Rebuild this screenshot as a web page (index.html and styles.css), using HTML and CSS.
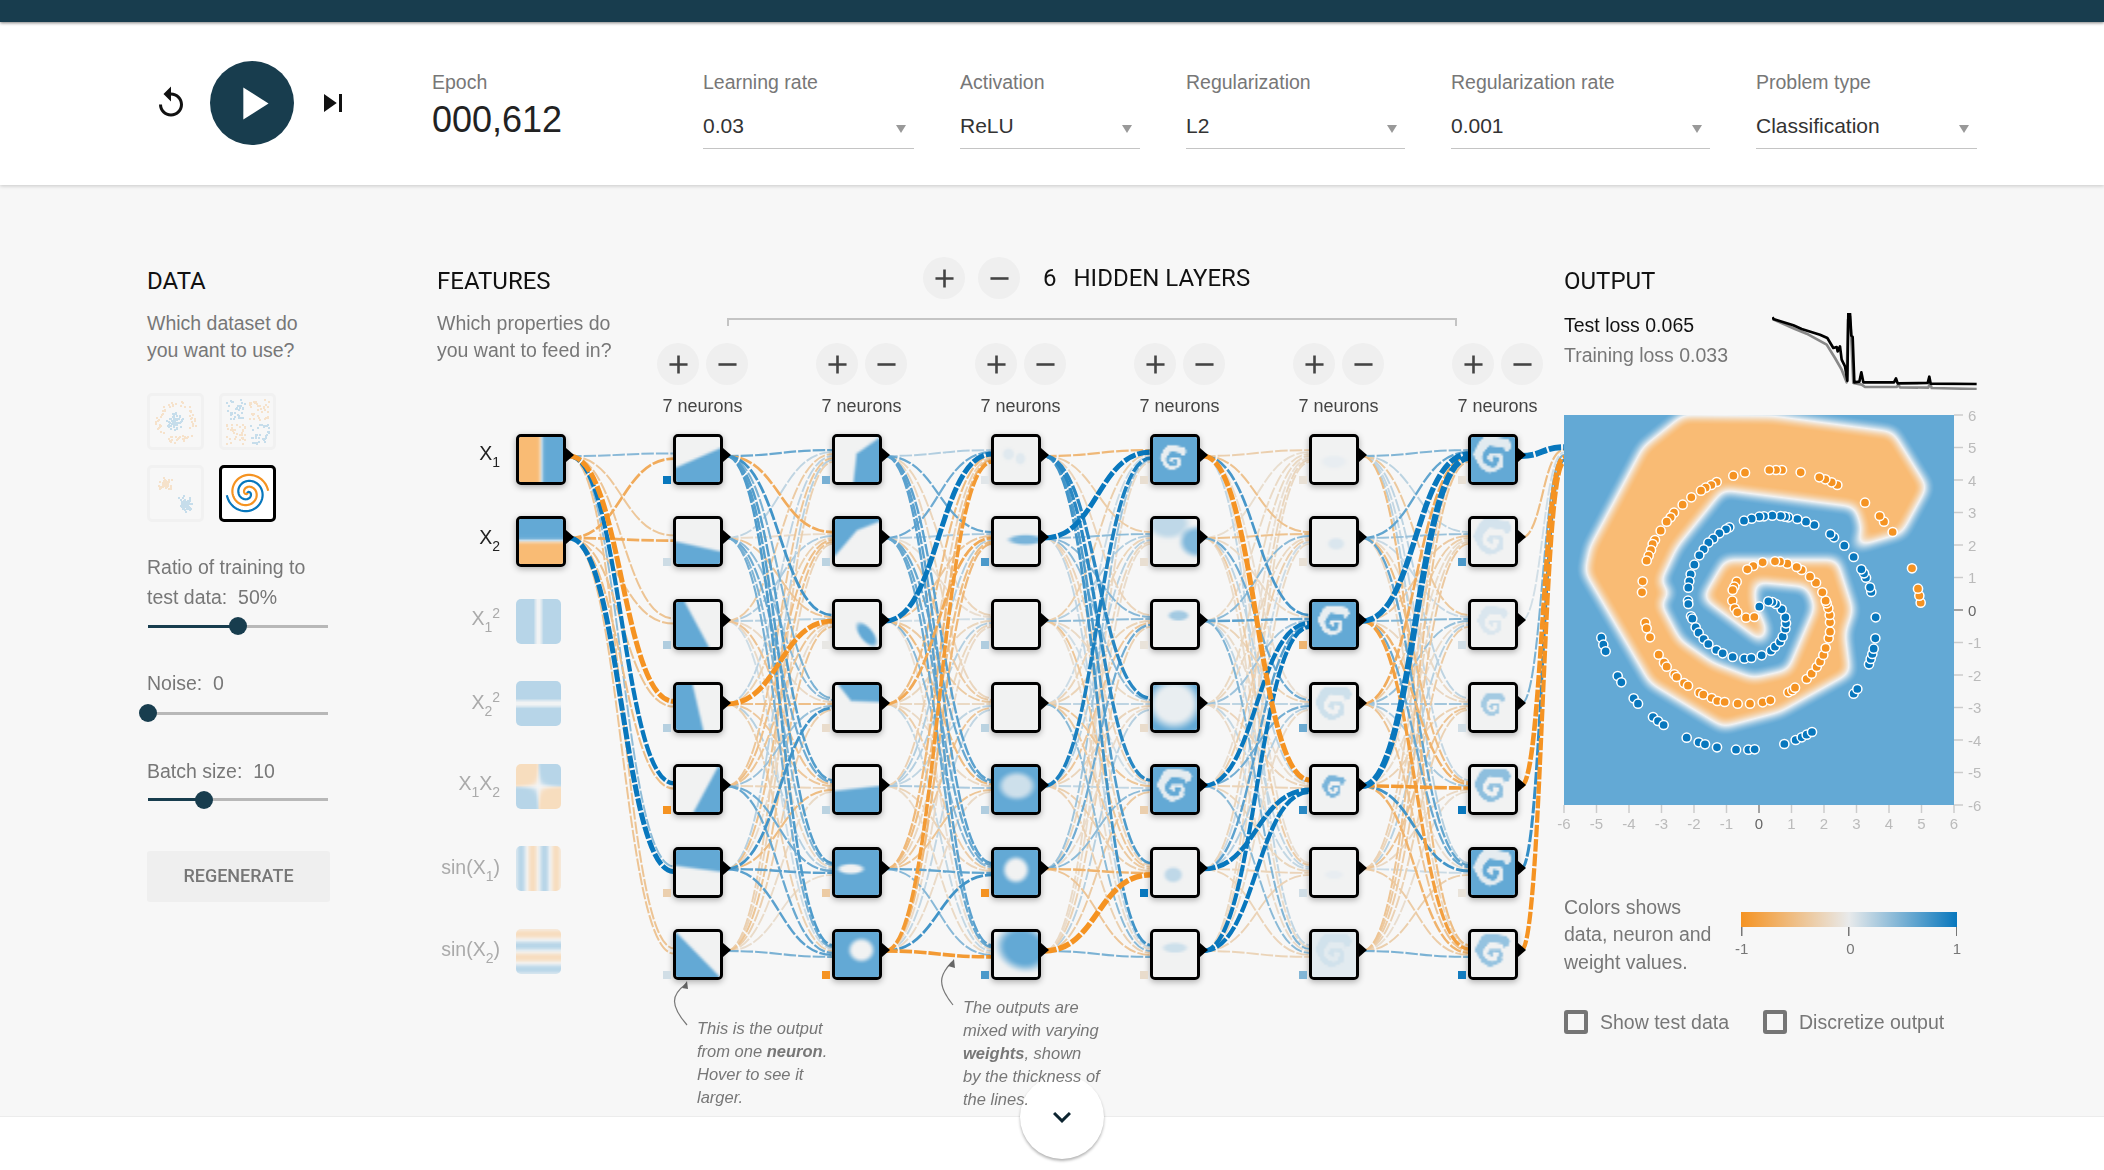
FILE: index.html
```html
<!DOCTYPE html>
<html lang="en">
<head>
    <meta charset="UTF-8">
    <title>Tensorflow - Neural Network Playground</title>
    <link rel="stylesheet" href="styles.css">
</head>
<body>
    <div class="top-bar"></div>

    <header class="controls">
        <div class="player">
            <svg class="icon-36" viewBox="0 0 24 24"><path d="M12 5V1L7 6l5 5V7c3.31 0 6 2.69 6 6s-2.69 6-6 6-6-2.69-6-6H4c0 4.42 3.58 8 8 8s8-3.58 8-8-3.58-8-8-8z"/></svg>
            <button class="play-btn"><svg viewBox="0 0 24 24"><path d="M8 5v14l11-7z"/></svg></button>
            <svg class="icon-36" viewBox="0 0 24 24"><path d="M6 18l8.5-6L6 6v12zM16 6v12h2V6h-2z"/></svg>
        </div>
        <div class="field field-epoch">
            <div class="field-label">Epoch</div>
            <div class="epoch-value">000,612</div>
        </div>
        <div class="field field-lr">
            <div class="field-label">Learning rate</div>
            <div class="select-box"><span>0.03</span><i class="caret"></i></div>
        </div>
        <div class="field field-act">
            <div class="field-label">Activation</div>
            <div class="select-box"><span>ReLU</span><i class="caret"></i></div>
        </div>
        <div class="field field-reg">
            <div class="field-label">Regularization</div>
            <div class="select-box"><span>L2</span><i class="caret"></i></div>
        </div>
        <div class="field field-rate">
            <div class="field-label">Regularization rate</div>
            <div class="select-box"><span>0.001</span><i class="caret"></i></div>
        </div>
        <div class="field field-type">
            <div class="field-label">Problem type</div>
            <div class="select-box"><span>Classification</span><i class="caret"></i></div>
        </div>
    </header>

    <main class="main">
        <!-- Data -->
        <section class="data-col">
            <h2>DATA</h2>
            <p class="intro">Which dataset do<br>you want to use?</p>
            <div class="datasets">
                <div class="dataset"><canvas data-kind="circle" width="51" height="51"></canvas></div>
                <div class="dataset"><canvas data-kind="xor" width="51" height="51"></canvas></div>
                <div class="dataset"><canvas data-kind="gauss" width="51" height="51"></canvas></div>
                <div class="dataset selected"><canvas data-kind="spiral" width="51" height="51"></canvas></div>
            </div>
            <p class="slider-label ratio-label">Ratio of training to<br>test data:&nbsp; 50%</p>
            <div class="slider ratio-slider"><div class="slider-fill" style="width: 50%"></div><div class="slider-thumb" style="left: 50%"></div></div>
            <p class="slider-label noise-label">Noise:&nbsp; 0</p>
            <div class="slider noise-slider"><div class="slider-fill" style="width: 0%"></div><div class="slider-thumb" style="left: 0%"></div></div>
            <p class="slider-label batch-label">Batch size:&nbsp; 10</p>
            <div class="slider batch-slider"><div class="slider-fill" style="width: 31%"></div><div class="slider-thumb" style="left: 31%"></div></div>
            <button class="regenerate">REGENERATE</button>
        </section>

        <!-- Features and hidden layers -->
        <section class="net-col">
            <div class="net-top">
                <div class="features-intro">
                    <h2>FEATURES</h2>
                    <p class="intro">Which properties do<br>you want to feed in?</p>
                </div>
                <div class="hidden-area">
                    <div class="hidden-head">
                        <button class="round-btn"><svg viewBox="0 0 24 24"><path d="M19 13h-6v6h-2v-6H5v-2h6V5h2v6h6v2z"/></svg></button>
                        <button class="round-btn"><svg viewBox="0 0 24 24"><path d="M19 13H5v-2h14v2z"/></svg></button>
                        <span class="layer-count">6</span>
                        <span class="layer-title">HIDDEN LAYERS</span>
                    </div>
                    <div class="bracket"></div>
                    <div class="layer-controls" id="layerControls"></div>
                </div>
            </div>
            <div class="network" id="network">
                <svg class="links" id="links" width="1127" height="696"></svg>
                <div class="callout callout-neuron">This is the output<br>from one <b>neuron</b>.<br>Hover to see it<br>larger.</div>
                <div class="callout callout-weight">The outputs are<br>mixed with varying<br><b>weights</b>, shown<br>by the thickness of<br>the lines.</div>
            </div>
        </section>

        <!-- Output -->
        <section class="out-col">
            <h2>OUTPUT</h2>
            <div class="loss-row">
                <div class="loss-text">
                    <div class="test-loss">Test loss 0.065</div>
                    <div class="train-loss">Training loss 0.033</div>
                </div>
                <svg class="loss-chart" viewBox="697 190 613 231">
                    <polyline class="loss-train" points="697,208 765,238 800,252 860,285 885,325 905,360 920,398 924,210 930,200 935,290 940,400 965,405 975,412 1070,412 1075,405 1080,413 1165,414 1170,400 1175,415 1310,418"/>
                    <polyline class="loss-test" points="697,203 702,209 760,227 785,238 840,255 862,265 880,295 890,292 893,305 900,290 905,330 915,350 922,393 925,192 930,192 934,258 938,262 943,398 958,396 964,368 970,398 1062,398 1068,386 1073,401 1163,400 1168,381 1172,402 1310,403"/>
                </svg>
            </div>
            <div class="plot">
                <canvas id="heatmap" width="390" height="390"></canvas>
                <svg class="plot-overlay" id="plotOverlay" width="440" height="440"></svg>
            </div>
            <div class="legend">
                <p class="legend-text">Colors shows<br>data, neuron and<br>weight values.</p>
                <div class="legend-scale">
                    <div class="legend-bar"></div>
                    <div class="legend-ticks"><span>-1</span><span>0</span><span>1</span></div>
                </div>
            </div>
            <div class="options">
                <label class="option option-test"><span class="checkbox"></span>Show test data</label>
                <label class="option"><span class="checkbox"></span>Discretize output</label>
            </div>
        </section>
    </main>

    <footer class="page-foot">
        <button class="more-btn"><svg viewBox="0 0 24 24"><path d="M7.41 8.59L12 13.17l4.59-4.58L18 10l-6 6-6-6 1.41-1.41z"/></svg></button>
    </footer>

    <script src="app.js"></script>
</body>
</html>
```

FILE: styles.css
```css
html, body {
    margin: 0;
    padding: 0;
    overflow: hidden;
}

body {
    width: 2104px;
    height: 1170px;
    background-color: #f7f7f7;
    font-family: "Liberation Sans", Arial, sans-serif;
    color: #777;
}

p {
    margin: 0;
}

button {
    border: none;
    padding: 0;
    font-family: inherit;
}

.top-bar {
    height: 22px;
    background-color: #183d4e;
    box-shadow: 0 1px 3px rgba(0, 0, 0, 0.5);
    position: relative;
    z-index: 2;
}

/* Header row */
.controls {
    height: 163px;
    background-color: white;
    box-shadow: 0 1px 4px rgba(0, 0, 0, 0.2);
    display: flex;
    align-items: center;
    gap: 46px;
    padding-left: 153px;
    box-sizing: border-box;
    position: relative;
    z-index: 1;
}

.player {
    display: flex;
    align-items: center;
    gap: 21px;
    width: 198px;
    margin-right: 35px;
    margin-bottom: 1px;
}

.icon-36 {
    width: 36px;
    height: 36px;
    fill: #111;
}

.play-btn {
    width: 84px;
    height: 84px;
    border-radius: 50%;
    background-color: #183d4e;
    display: flex;
    align-items: center;
    justify-content: center;
}

.play-btn svg {
    width: 55px;
    height: 55px;
    fill: white;
}

.field {
    height: 80px;
    margin-top: 11px;
}

.field-epoch { width: 225px; }
.field-lr { width: 211px; }
.field-act { width: 180px; }
.field-reg { width: 219px; }
.field-rate { width: 259px; }
.field-type { width: 221px; }

.field-label {
    font-size: 19.5px;
    line-height: 26px;
    color: #777;
}

.epoch-value {
    font-size: 36px;
    line-height: 46px;
    margin-top: 2px;
    color: #222;
}

.select-box {
    margin-top: 9px;
    height: 44px;
    line-height: 46px;
    font-size: 21px;
    color: #333;
    border-bottom: 1.5px solid #c4c4c4;
    display: flex;
    justify-content: space-between;
    align-items: center;
    padding-right: 8px;
}

.caret {
    border-top: 8px solid #999;
    border-left: 5.5px solid transparent;
    border-right: 5.5px solid transparent;
    margin-top: 6px;
}

/* Main columns */
.main {
    height: 931px;
    display: flex;
    box-sizing: border-box;
    padding: 81px 0 0 147px;
}

h2 {
    margin: 0 0 13.5px;
    font-family: Roboto, sans-serif;
    font-weight: 400;
    font-size: 24px;
    line-height: 30px;
    color: #111;
}

.intro {
    font-size: 19.5px;
    line-height: 27px;
    white-space: nowrap;
}

.data-col {
    width: 290px;
    flex: none;
}

.datasets {
    display: grid;
    grid-template-columns: 57px 57px;
    grid-auto-rows: 57px;
    gap: 15px;
    margin-top: 29px;
}

.dataset {
    border: 3px solid #f1f1f1;
    border-radius: 5px;
    box-sizing: border-box;
}

.dataset canvas {
    display: block;
    opacity: 0.2;
}

.dataset.selected {
    border-color: black;
    background-color: white;
}

.dataset.selected canvas {
    opacity: 1;
}

.slider-label {
    font-size: 19.5px;
    line-height: 30px;
}

.ratio-label { margin-top: 30.5px; }
.noise-label { margin-top: 40.5px; }
.batch-label { margin-top: 41px; }

.slider {
    position: relative;
    width: 180px;
    height: 3px;
    margin-left: 1px;
    background-color: #b8b8b8;
}

.ratio-slider { margin-top: 12.5px; }
.noise-slider { margin-top: 13.5px; }
.batch-slider { margin-top: 12.5px; }

.slider-fill {
    height: 100%;
    background-color: #183d4e;
}

.slider-thumb {
    position: absolute;
    top: -7.5px;
    width: 18px;
    height: 18px;
    margin-left: -9px;
    border-radius: 50%;
    background-color: #183d4e;
}

.regenerate {
    display: block;
    margin-top: 50px;
    width: 183px;
    height: 51px;
    padding-bottom: 2px;
    border-radius: 3px;
    background-color: #efefef;
    font-family: Roboto, sans-serif;
    font-weight: 500;
    font-size: 18px;
    color: #777;
}

/* Network */
.net-col {
    width: 1127px;
    flex: none;
}

.net-top {
    display: flex;
}

.features-intro {
    width: 220px;
    flex: none;
}

.hidden-area {
    margin-top: -9px;
    flex: none;
}

.hidden-head {
    display: flex;
    align-items: center;
    padding-left: 266px;
    gap: 13px;
    font-family: Roboto, sans-serif;
    font-size: 24px;
    color: #111;
}

.layer-count {
    margin-left: 10px;
    margin-right: 4px;
}

.round-btn {
    width: 42px;
    height: 42px;
    border-radius: 50%;
    background-color: #efefef;
    display: flex;
    align-items: center;
    justify-content: center;
}

.round-btn svg {
    width: 31px;
    height: 31px;
    fill: #444;
}

.bracket {
    width: 730px;
    height: 8px;
    margin: 19px 0 0 70px;
    border: 2px solid #c4c4c4;
    border-bottom: none;
    box-sizing: border-box;
}

.layer-controls {
    display: grid;
    grid-template-columns: repeat(6, 159px);
    margin-top: 17px;
}

.layer-ctl {
    width: 91px;
    display: flex;
    flex-wrap: wrap;
    justify-content: space-between;
}

.neuron-count {
    width: 100%;
    margin-top: 9px;
    text-align: center;
    font-size: 18px;
    line-height: 24px;
    color: #444;
}

.network {
    position: relative;
    z-index: 1;
    margin-top: 2px;
    height: 696px;
}

.links {
    position: absolute;
    left: 0;
    top: 0;
    overflow: visible;
}

.link {
    fill: none;
    stroke-dasharray: 12.5, 2;
}

.note-arrow {
    fill: none;
    stroke: #777;
    stroke-width: 1.2;
}

.note-head {
    fill: #666;
}

.node {
    position: absolute;
    width: 50px;
    height: 51px;
    box-sizing: border-box;
    border: 3.5px solid black;
    border-radius: 5px;
    background-color: white;
    box-shadow: 0 2px 6px rgba(0, 0, 0, 0.3);
}

.node canvas {
    display: block;
    width: 100%;
    height: 100%;
    border-radius: 2px;
}

.node::after {
    content: "";
    position: absolute;
    right: -11px;
    top: 11px;
    border-left: 8px solid black;
    border-top: 7px solid transparent;
    border-bottom: 7px solid transparent;
}

.node.off {
    width: 45px;
    height: 45px;
    border: none;
    border-radius: 5px;
    box-shadow: none;
    background: none;
    opacity: 0.43;
}

.node.off canvas {
    border-radius: 5px;
}

.node.off::after {
    display: none;
}

.bias {
    position: absolute;
    width: 7.5px;
    height: 7.5px;
}

.input-label {
    position: absolute;
    left: -40px;
    width: 103px;
    text-align: right;
    font-size: 19.5px;
    line-height: 24px;
    color: #aaa;
}

.input-label.on {
    color: #222;
}

.input-label sub,
.input-label sup {
    font-size: 14px;
    line-height: 0;
}

.input-label sub { vertical-align: -7px; }
.input-label sup { vertical-align: 7px; }

.callout {
    position: absolute;
    font-size: 16.5px;
    line-height: 23px;
    font-style: italic;
    color: #777;
}

.callout-neuron {
    left: 260px;
    top: 597px;
}

.callout-weight {
    left: 526px;
    top: 576px;
}

/* Output */
.out-col {
    width: 415px;
    flex: none;
}

.out-col h2 {
    margin-bottom: 14px;
}

.loss-row {
    display: flex;
    height: 105px;
}

.loss-text {
    width: 208px;
    font-size: 19.5px;
    line-height: 30px;
}

.test-loss {
    color: #111;
}

.loss-chart {
    width: 205px;
    height: 77px;
    margin-top: 3px;
}

.loss-chart polyline {
    fill: none;
    stroke-linejoin: round;
}

.loss-train {
    stroke: #888;
    stroke-width: 8;
}

.loss-test {
    stroke: black;
    stroke-width: 8;
}

.plot {
    position: relative;
    width: 390px;
    height: 390px;
}

.plot canvas {
    display: block;
}

.plot-overlay {
    position: absolute;
    left: 0;
    top: 0;
    overflow: visible;
}

.data-dot {
    stroke: white;
    stroke-width: 1.5;
}

.axis-text {
    font-family: "Liberation Sans", Arial, sans-serif;
    font-size: 15px;
    fill: #bbb;
}

.axis-text.zero {
    fill: #666;
}

.legend {
    display: flex;
    margin-top: 88.5px;
}

.legend-text {
    width: 177px;
    font-size: 19.5px;
    line-height: 27.5px;
}

.legend-scale {
    width: 216px;
    margin-top: 18.5px;
}

.legend-bar {
    height: 15px;
    background: linear-gradient(to right, #f59322, #e8eaeb 50%, #0877bd);
}

.legend-ticks {
    display: flex;
    justify-content: space-between;
    padding-top: 13px;
    font-size: 15px;
    line-height: 18px;
    background-image: linear-gradient(#777, #777), linear-gradient(#777, #777), linear-gradient(#777, #777);
    background-size: 1.5px 9px;
    background-position: 0 0, 50% 0, 100% 0;
    background-repeat: no-repeat;
}

.legend-ticks span:first-child { margin-left: -6px; }
.legend-ticks span:last-child { margin-right: -4px; }

.options {
    display: flex;
    margin-top: 33px;
}

.option {
    display: flex;
    align-items: center;
    gap: 12px;
    font-size: 19.5px;
    line-height: 26px;
}

.option-test {
    width: 199px;
}

.checkbox {
    width: 24px;
    height: 24px;
    box-sizing: border-box;
    border: 4px solid #757575;
    border-radius: 3px;
}

/* Footer */
.page-foot {
    height: 54px;
    background-color: white;
    border-top: 1px solid #ececec;
    box-sizing: border-box;
    position: relative;
}

.more-btn {
    position: absolute;
    left: 1020px;
    top: -42px;
    width: 84px;
    height: 84px;
    border-radius: 50%;
    background-color: white;
    box-shadow: 0 2px 3px rgba(0, 0, 0, 0.3);
    display: flex;
    align-items: center;
    justify-content: center;
}

.more-btn svg {
    width: 36px;
    height: 36px;
    fill: #0c2430;
}
```

FILE: app.js
```js
// Neural network playground snapshot: draws thumbnails, links and the output plot

const NET_LEFT = 437, NET_TOP = 420;
const LAYER_X = [516, 673, 832, 991, 1150, 1309, 1468];
const ROW_Y = [434, 516, 599, 682, 764, 847, 929];
const OUTPUT_X = 1564, OUTPUT_CY = 455;
const SVG_NS = 'http://www.w3.org/2000/svg';

const ORANGE = [245, 147, 34], MID = [232, 234, 235], BLUE = [8, 119, 189];

// Seeded random so the picture stays the same between runs
let seed = 4711;
function rand() {
    seed = (seed * 16807) % 2147483647;
    return seed / 2147483647;
}

function scaleColor(v) {
    v = Math.max(-1, Math.min(1, v));
    const end = v > 0 ? BLUE : ORANGE;
    const t = Math.abs(v);
    return MID.map((c, i) => c + (end[i] - c) * t);
}

function cssColor(v) {
    const c = scaleColor(v);
    return `rgb(${c[0] | 0},${c[1] | 0},${c[2] | 0})`;
}

// Heatmap colour: the scale at 63% over white
function heatColor(v) {
    return scaleColor(v).map(c => c * 0.63 + 255 * 0.37);
}

function smooth(a, b, x) {
    const t = Math.max(0, Math.min(1, (x - a) / (b - a)));
    return t * t * (3 - 2 * t);
}

// Orange region of the output plot, in plot pixels
const SPIRAL = [
    [291, 132], [338, 118], [363, 72], [329, 17], [209, 1], [119, 0], [79, 32], [26, 132], [21, 157],
    [86, 268], [159, 312], [216, 297], [286, 258], [281, 218], [289, 195], [273, 145], [161, 145],
    [139, 183], [198, 227], [203, 215], [191, 188], [191, 167], [243, 172], [251, 192], [224, 255],
    [189, 263], [149, 248], [116, 225], [96, 187], [108, 178], [96, 168], [113, 132], [159, 75],
    [291, 92], [298, 115]
];

function buildMask() {
    const c = document.createElement('canvas');
    c.width = c.height = 390;
    const ctx = c.getContext('2d');
    ctx.filter = 'blur(6px)';
    ctx.fillStyle = 'white';
    ctx.beginPath();
    SPIRAL.forEach((p, i) => i ? ctx.lineTo(p[0], p[1]) : ctx.moveTo(p[0], p[1]));
    ctx.closePath();
    ctx.fill();
    const data = ctx.getImageData(0, 0, 390, 390).data;
    const mask = new Float32Array(390 * 390);
    for (let i = 0; i < mask.length; i++) mask[i] = data[i * 4 + 3] / 255;
    return mask;
}

const MASK = buildMask();

function sampleMask(x, y, s, ox = 0.5, oy = 0.5) {
    const u = Math.floor(((x - 0.5) * s + ox) * 390);
    const w = Math.floor(((y - 0.5) * s + oy) * 390);
    if (u < 0 || w < 0 || u >= 390 || w >= 390) return 0;
    return smooth(0.12, 0.88, MASK[w * 390 + u]);
}

// Shape helpers, each returns a function of x,y in 0..1
const half = (x0, y0, x1, y1, k = 0.05) => (x, y) => {
    const len = Math.hypot(x1 - x0, y1 - y0);
    const d = ((x1 - x0) * (y - y0) - (y1 - y0) * (x - x0)) / len;
    return smooth(-k, k, d);
};
const blob = (cx, cy, rx, ry, rot = 0) => (x, y) => {
    const c = Math.cos(rot), s = Math.sin(rot);
    const dx = x - cx, dy = y - cy;
    const a = (dx * c + dy * s) / rx, b = (-dx * s + dy * c) / ry;
    return 1 - smooth(0.6, 1.15, Math.hypot(a, b));
};
const inv = f => (x, y) => 1 - f(x, y);
const amp = (k, f) => (x, y) => k * f(x, y);
const both = (f, g) => (x, y) => Math.min(f(x, y), g(x, y));
const either = (f, g) => (x, y) => Math.max(f(x, y), g(x, y));
const add = (f, g) => (x, y) => f(x, y) + g(x, y);
const nothing = () => 0;
const swirl = (s, ox, oy) => (x, y) => sampleMask(x, y, s, ox, oy);

// Neuron thumbnails, by layer then row
const SHAPES = [
    [
        half(0, 0.68, 1, 0.25), half(0, 0.5, 1, 0.72), half(0.2, 0, 0.75, 1), half(0.38, 0, 0.62, 1),
        half(0.4, 1, 0.95, 0), half(1, 0.48, 0, 0.35), half(0, 0, 1, 1)
    ],
    [
        either(both(half(0.42, 1, 0.5, 0.3), half(0.42, 0.42, 1, 0.02)), amp(0.55, both(half(0.42, 0.42, 1, 0.02, 0.08), inv(half(0.5, 0, 1, 0.15))))),
        either(half(0.5, 0.25, 0, 0.82), half(1, 0.06, 0.5, 0.25)),
        blob(0.72, 0.72, 0.16, 0.34, -0.7),
        both(half(1, 0.38, 0, 0.34), half(0.42, 0.42, 0.08, 0)),
        half(0, 0.53, 1, 0.42),
        inv(blob(0.36, 0.42, 0.32, 0.12)),
        inv(blob(0.6, 0.4, 0.3, 0.27))
    ],
    [
        add(amp(0.12, blob(0.33, 0.38, 0.14, 0.14)), amp(0.12, blob(0.6, 0.48, 0.12, 0.14))),
        amp(0.85, blob(0.72, 0.46, 0.42, 0.12)),
        nothing,
        nothing,
        inv(amp(0.75, blob(0.52, 0.42, 0.42, 0.32))),
        inv(blob(0.5, 0.44, 0.3, 0.3)),
        blob(0.66, 0.36, 0.62, 0.5, 0.3)
    ],
    [
        inv(amp(0.95, swirl(1.45, 0.55, 0.45))),
        add(amp(0.8, blob(1, 0.5, 0.4, 0.35)), amp(0.35, blob(0.35, 0.1, 0.5, 0.35))),
        amp(0.55, blob(0.58, 0.3, 0.25, 0.12)),
        inv(amp(0.95, blob(0.48, 0.42, 0.6, 0.56))),
        inv(amp(0.92, swirl(1.1))),
        amp(0.35, blob(0.46, 0.55, 0.22, 0.18)),
        amp(0.25, blob(0.5, 0.35, 0.3, 0.12))
    ],
    [
        amp(0.06, blob(0.5, 0.55, 0.3, 0.15)),
        amp(0.16, blob(0.55, 0.55, 0.2, 0.14)),
        inv(amp(0.95, swirl(1.2))),
        amp(0.25, swirl(1.05)),
        amp(0.85, swirl(1.65)),
        amp(0.06, blob(0.5, 0.55, 0.22, 0.1)),
        (x, y) => 0.1 + 0.12 * sampleMask(x, y, 1.05)
    ],
    [
        inv(amp(0.9, swirl(1))),
        amp(0.2, swirl(1)),
        amp(0.16, swirl(1.25)),
        amp(0.55, swirl(1.55)),
        amp(0.7, swirl(1.05)),
        inv(amp(0.92, swirl(1))),
        amp(0.65, swirl(1.1))
    ]
];

// Output weight of the small square beside each neuron
const BIAS = [
    [1, 0.12, 0.25, 0.22, -1, -0.3, 0.1],
    [0.5, 0.2, -0.03, -0.15, 0.2, -0.35, -1],
    [0.03, 0.7, 0.25, 0.2, 0.25, -1, 0.7],
    [-0.12, -0.12, -0.08, -0.15, -0.3, 1, -0.15],
    [-0.1, -0.1, -0.6, 0.55, 0.85, 0.1, 0.45],
    [-0.1, 0.7, 0.1, 0.1, 1, -0.08, 0.95]
];

// Links that stand out: [gap between layers, from, to, weight]
const STRONG = [
    [0, 0, 0, 0.5], [0, 0, 1, -0.4], [0, 0, 2, -0.5], [0, 0, 3, -3], [0, 0, 4, 2.6], [0, 0, 5, 0.4], [0, 0, 6, -0.5],
    [0, 1, 0, -1.5], [0, 1, 1, -1.5], [0, 1, 2, -0.5], [0, 1, 3, -0.6], [0, 1, 4, -0.7], [0, 1, 5, 3], [0, 1, 6, -0.5],
    [1, 0, 0, 1], [1, 0, 1, -1.5], [1, 0, 2, 1.6], [1, 0, 3, 0.7], [1, 0, 4, 1.3], [1, 0, 5, 1.3], [1, 0, 6, 1.4],
    [1, 1, 4, 0.9], [1, 1, 5, 0.6], [1, 1, 6, 0.8],
    [1, 3, 2, -3], [1, 3, 3, -0.7],
    [1, 4, 5, 0.9], [1, 4, 6, 1], [1, 4, 1, -0.7],
    [1, 5, 1, -0.6], [1, 5, 3, 1.6], [1, 5, 4, -0.8], [1, 5, 5, 1.2], [1, 5, 6, 1.2],
    [1, 6, 6, 0.7],
    [2, 0, 1, 1], [2, 0, 4, 1.2], [2, 0, 5, 1.2], [2, 0, 6, 1.2],
    [2, 1, 0, 0.9], [2, 1, 4, 1], [2, 1, 5, 1], [2, 1, 6, 1],
    [2, 2, 0, 3], [2, 2, 4, -0.8], [2, 2, 5, 0.5],
    [2, 3, 0, -0.8], [2, 3, 1, -1.6],
    [2, 5, 0, -1], [2, 5, 1, -0.8], [2, 5, 5, 1.1], [2, 5, 6, 0.5],
    [2, 6, 0, -2.2], [2, 6, 1, -1], [2, 6, 5, 1.6], [2, 6, 6, -2.2],
    [3, 0, 0, -1], [3, 0, 3, 2], [3, 0, 4, 2], [3, 0, 5, 1.4], [3, 0, 6, 1.6],
    [3, 1, 0, 3], [3, 1, 1, 0.4], [3, 1, 2, 0.5],
    [3, 4, 0, 2.2],
    [3, 5, 2, 0.9], [3, 5, 5, -1.2],
    [3, 6, 5, -3.2], [3, 6, 6, 0.7],
    [4, 0, 1, -0.6], [4, 0, 2, 1.5], [4, 0, 4, -3],
    [4, 1, 1, -0.6], [4, 1, 3, 0.9],
    [4, 2, 2, 1.2], [4, 2, 6, 0.6],
    [4, 4, 2, 2.6], [4, 4, 3, 0.8],
    [4, 5, 2, 1.2], [4, 5, 4, 2.8],
    [4, 6, 2, 2.5], [4, 6, 4, 2.6], [4, 6, 6, -0.25],
    [5, 0, 0, 0.6], [5, 0, 6, -0.8],
    [5, 1, 0, 1.1], [5, 1, 4, -0.8], [5, 1, 5, 1.1],
    [5, 2, 0, 3.2], [5, 2, 4, -1.2], [5, 2, 5, 1], [5, 2, 6, -2],
    [5, 3, 0, -1.5],
    [5, 4, 0, 3.5], [5, 4, 4, -2.2], [5, 4, 5, 1.6], [5, 4, 6, -1.2],
    [5, 6, 6, 0.7],
    [6, 0, 0, 3.4], [6, 1, 0, -0.8], [6, 2, 0, 0.1], [6, 3, 0, 0.7], [6, 4, 0, -2.8], [6, 5, 0, 1.8], [6, 6, 0, -2.6]
];

function paintCanvas(canvas, fn) {
    const ctx = canvas.getContext('2d');
    const w = canvas.width, h = canvas.height;
    const img = ctx.createImageData(w, h);
    for (let j = 0; j < h; j++) {
        for (let i = 0; i < w; i++) {
            const c = heatColor(fn((i + 0.5) / w, (j + 0.5) / h));
            const k = (j * w + i) * 4;
            img.data[k] = c[0];
            img.data[k + 1] = c[1];
            img.data[k + 2] = c[2];
            img.data[k + 3] = 255;
        }
    }
    ctx.putImageData(img, 0, 0);
}

const network = document.getElementById('network');

function addNode(x, y, fn, off) {
    const node = document.createElement('div');
    node.className = off ? 'node off' : 'node';
    node.style.left = (x - NET_LEFT) + 'px';
    node.style.top = (y - NET_TOP) + 'px';
    const canvas = document.createElement('canvas');
    // low resolution on purpose, the browser smooths it when it scales up
    canvas.width = canvas.height = 22;
    paintCanvas(canvas, fn);
    node.appendChild(canvas);
    network.appendChild(node);
}

// Input features
const soft = (t, k) => Math.tanh(t * k);
const INPUTS = [
    { html: 'X<sub>1</sub>', cy: 453, top: 434, on: true, fn: x => soft(x - 0.505, 22) },
    { html: 'X<sub>2</sub>', cy: 537, top: 516, on: true, fn: (x, y) => soft(0.49 - y, 22) },
    { html: 'X<sub>1</sub><sup>2</sup>', cy: 618, top: 599, fn: x => Math.min(1, Math.pow((x - 0.5) * 12, 2) / 1.5) },
    { html: 'X<sub>2</sub><sup>2</sup>', cy: 702, top: 681, fn: (x, y) => Math.min(1, Math.pow((y - 0.5) * 12, 2) / 1.5) },
    { html: 'X<sub>1</sub>X<sub>2</sub>', cy: 783, top: 764, fn: (x, y) => Math.tanh((x - 0.5) * (0.5 - y) * 100) },
    { html: 'sin(X<sub>1</sub>)', cy: 867, top: 846, fn: x => Math.sin((x - 0.5) * 12) },
    { html: 'sin(X<sub>2</sub>)', cy: 949, top: 929, fn: (x, y) => Math.sin((0.5 - y) * 12) }
];

INPUTS.forEach(input => {
    addNode(LAYER_X[0], input.top, input.fn, !input.on);
    const label = document.createElement('div');
    label.className = input.on ? 'input-label on' : 'input-label';
    label.innerHTML = input.html;
    label.style.top = (input.cy - 12 - NET_TOP) + 'px';
    network.appendChild(label);
});

// Hidden neurons and their bias squares
SHAPES.forEach((layer, l) => {
    layer.forEach((fn, r) => {
        addNode(LAYER_X[l + 1], ROW_Y[r], fn, false);
        const bias = document.createElement('div');
        bias.className = 'bias';
        bias.style.left = (LAYER_X[l + 1] - 10 - NET_LEFT) + 'px';
        bias.style.top = (ROW_Y[r] + 42 - NET_TOP) + 'px';
        bias.style.background = cssColor(BIAS[l][r]);
        network.appendChild(bias);
    });
});

// +/- buttons above each hidden layer
const ctlBox = document.getElementById('layerControls');
for (let i = 0; i < 6; i++) {
    ctlBox.insertAdjacentHTML('beforeend', `
        <div class="layer-ctl">
            <button class="round-btn"><svg viewBox="0 0 24 24"><path d="M19 13h-6v6h-2v-6H5v-2h6V5h2v6h6v2z"/></svg></button>
            <button class="round-btn"><svg viewBox="0 0 24 24"><path d="M19 13H5v-2h14v2z"/></svg></button>
            <div class="neuron-count">7 neurons</div>
        </div>`);
}

// Links between layers
function svgEl(name, attrs) {
    const el = document.createElementNS(SVG_NS, name);
    Object.keys(attrs).forEach(k => el.setAttribute(k, attrs[k]));
    return el;
}

function linkPath(sx, sy, tx, ty) {
    const mx = (sx + tx) / 2;
    return `M${sx},${sy}C${mx},${sy} ${mx},${ty} ${tx},${ty}`;
}

const links = [];
const strongMap = {};
STRONG.forEach(s => { strongMap[s.slice(0, 3).join('-')] = s[3]; });

function baseWeight(gap) {
    const mag = 0.1 + 0.42 * rand() * rand() + 0.1 * rand();
    return (rand() < 0.62 ? -mag : mag) * (gap === 0 ? 1.2 : 1);
}

for (let gap = 0; gap < 6; gap++) {
    const fromCount = gap === 0 ? 2 : 7;
    for (let to = 0; to < 7; to++) {
        for (let from = 0; from < fromCount; from++) {
            const key = [gap, from, to].join('-');
            const w = key in strongMap ? strongMap[key] : baseWeight(gap);
            const offset = ((from + 1 - (fromCount + 1) / 2) / ((fromCount + 1) / 2)) * 9 / 1.15;
            links.push({
                sx: LAYER_X[gap] + 53,
                sy: ROW_Y[from] + 22,
                tx: LAYER_X[gap + 1] + 1,
                ty: ROW_Y[to] + 22 + offset,
                w: w
            });
        }
    }
}

// Last hidden layer into the output plot
for (let from = 0; from < 7; from++) {
    const w = strongMap[[6, from, 0].join('-')];
    links.push({
        sx: LAYER_X[6] + 53,
        sy: ROW_Y[from] + 22,
        tx: OUTPUT_X,
        ty: OUTPUT_CY + (from - 3) * 2.6,
        w: w
    });
}

links.sort((a, b) => Math.abs(a.w) - Math.abs(b.w));

// Colour stays pale until a weight is clearly strong
function linkShade(w) {
    const a = Math.abs(w);
    const v = a < 0.4 ? a : 0.4 + 0.6 * Math.min(1, (a - 0.4) / 2.1);
    return w < 0 ? -v : v;
}

const linkSvg = document.getElementById('links');
links.forEach(link => {
    const a = Math.abs(link.w);
    linkSvg.appendChild(svgEl('path', {
        class: 'link',
        d: linkPath(link.sx - NET_LEFT, link.sy - NET_TOP, link.tx - NET_LEFT, link.ty - NET_TOP),
        stroke: cssColor(linkShade(link.w)),
        'stroke-width': 1.9 + 0.35 * a * a
    }));
});

// Arrows for the two notes
[
    { d: 'M250,605 C233,585 234,575 249,564', head: '250,561 245,568 251,569' },
    { d: 'M516,585 C500,565 502,555 515,542', head: '517,539 511,546 518,548' }
].forEach(a => {
    linkSvg.appendChild(svgEl('path', { class: 'note-arrow', d: a.d }));
    linkSvg.appendChild(svgEl('polygon', { class: 'note-head', points: a.head }));
});

// Output plot
const heat = document.getElementById('heatmap');
const heatCtx = heat.getContext('2d');
const heatImg = heatCtx.createImageData(390, 390);
for (let i = 0; i < MASK.length; i++) {
    const c = heatColor(Math.max(-1, Math.min(1, (0.5 - MASK[i]) * 2.2)));
    heatImg.data[i * 4] = c[0];
    heatImg.data[i * 4 + 1] = c[1];
    heatImg.data[i * 4 + 2] = c[2];
    heatImg.data[i * 4 + 3] = 255;
}
heatCtx.putImageData(heatImg, 0, 0);

const overlay = document.getElementById('plotOverlay');
for (let n = -6; n <= 6; n++) {
    const cls = n === 0 ? 'axis-text zero' : 'axis-text';
    const line = n === 0 ? '#888' : '#ccc';
    const px = (n + 6) * 32.5;
    const py = (6 - n) * 32.5;
    overlay.appendChild(svgEl('line', { x1: px, y1: 390, x2: px, y2: 398, stroke: line, 'stroke-width': 1.5 }));
    overlay.appendChild(svgEl('line', { x1: 390, y1: py, x2: 399, y2: py, stroke: line, 'stroke-width': 1.5 }));
    const xLabel = svgEl('text', { class: cls, x: px, y: 414, 'text-anchor': 'middle' });
    xLabel.textContent = n;
    overlay.appendChild(xLabel);
    const yLabel = svgEl('text', { class: cls, x: 404, y: py + 5.5 });
    yLabel.textContent = n;
    overlay.appendChild(yLabel);
}

// Training points, traced from the run; coordinates are 3x with an offset
const BLUE_POINTS = [
    184,293, 190,314, 197,334, 233,408, 244,427, 281,475, 294,491, 339,531, 354,543, 371,555, 440,593, 476,607,
    495,613, 531,622, 588,629, 625,629, 644,628, 733,612, 767,600, 785,592, 800,584, 816,576, 941,461, 952,447,
    987,373, 992,357, 997,342, 1001,326, 1006,295, 1007,232, 994,156, 990,142, 978,113, 972,100, 964,88, 941,51,
    913,17, 882,-8, 871,-18, 823,-45, 798,-55, 772,-63, 745,-68, 735,-70, 722,-72, 697,-73, 672,-71, 658,-70,
    635,-64, 612,-58, 568,-38, 558,-32, 538,-20, 520,-4, 505,8, 491,28, 478,46, 463,74, 452,103, 448,124, 445,143,
    444,182, 445,192, 453,229, 457,236, 467,262, 476,278, 491,297, 505,312, 529,330, 548,340, 578,351, 613,356,
    634,354, 665,346, 693,332, 705,320, 720,305, 728,290, 736,266, 738,250, 736,232, 725,208, 708,192, 697,186,
    685,184, 658,200
];
const ORANGE_POINTS = [
    1142,188, 1138,167, 1134,146, 1116,85, 1058,-24, 1032,-55, 1019,-72, 975,-112, 892,-165, 875,-173, 856,-182,
    838,-188, 782,-203, 726,-210, 708,-210, 688,-210, 615,-202, 580,-193, 530,-174, 514,-165, 497,-157, 483,-148,
    454,-128, 428,-106, 402,-82, 392,-68, 380,-55, 362,-28, 345,0, 338,12, 333,30, 326,47, 320,62, 308,124, 306,157,
    316,248, 320,265, 330,292, 356,344, 372,368, 380,380, 403,403, 410,411, 432,429, 444,437, 478,458, 490,464,
    515,474, 532,483, 554,486, 593,491, 630,491, 668,487, 691,481, 745,457, 757,451, 765,443, 800,417, 815,401,
    830,381, 840,365, 850,345, 857,324, 866,295, 870,275, 870,247, 869,225, 865,205, 860,190, 857,182, 847,157,
    828,128, 810,110, 785,90, 770,81, 742,71, 720,65, 705,64, 668,67, 640,78, 622,88, 590,125, 583,140, 578,150,
    577,182, 584,205, 592,217, 618,233, 643,231
];

function addDots(list, color) {
    for (let i = 0; i < list.length; i += 2) {
        overlay.appendChild(svgEl('circle', {
            class: 'data-dot',
            cx: (list[i] - 72) / 3,
            cy: (list[i + 1] + 375) / 3,
            r: 4.6,
            fill: color
        }));
    }
}
addDots(ORANGE_POINTS, '#f59322');
addDots(BLUE_POINTS, '#0877bd');

// Dataset thumbnails
function scatter(ctx, n, color, place) {
    ctx.fillStyle = color;
    for (let i = 0; i < n; i++) {
        const p = place();
        ctx.fillRect(Math.round(p[0]), Math.round(p[1]), 2, 2);
    }
}

function gaussian() {
    return (rand() + rand() + rand() - 1.5) / 1.5;
}

const THUMBS = {
    circle(ctx) {
        scatter(ctx, 70, '#f59322', () => {
            const a = rand() * 6.283, r = 15 + rand() * 6;
            return [25 + r * Math.cos(a), 25 + r * Math.sin(a)];
        });
        scatter(ctx, 70, '#0877bd', () => {
            const a = rand() * 6.283, r = rand() * 9;
            return [24 + r * Math.cos(a), 25 + r * Math.sin(a)];
        });
    },
    xor(ctx) {
        const cluster = (cx, cy, color) => scatter(ctx, 36, color, () => [cx + (rand() - 0.5) * 20, cy + (rand() - 0.5) * 20]);
        cluster(13, 13, '#0877bd');
        cluster(37, 13, '#f59322');
        cluster(13, 37, '#f59322');
        cluster(37, 37, '#0877bd');
    },
    gauss(ctx) {
        scatter(ctx, 60, '#f59322', () => [14 + gaussian() * 9, 15 + gaussian() * 9]);
        scatter(ctx, 60, '#0877bd', () => [35 + gaussian() * 9, 35 + gaussian() * 9]);
    },
    spiral(ctx) {
        [[Math.PI, '#f59322'], [0, '#0877bd']].forEach(([delta, color]) => {
            ctx.strokeStyle = color;
            ctx.lineWidth = 2.2;
            ctx.beginPath();
            for (let t = 0; t <= 1; t += 0.01) {
                const r = t * 21;
                const a = 3.5 * Math.PI * t + delta;
                ctx.lineTo(25.5 + r * Math.sin(a), 25 - r * Math.cos(a));
            }
            ctx.stroke();
        });
    }
};

document.querySelectorAll('.dataset canvas').forEach(canvas => {
    THUMBS[canvas.dataset.kind](canvas.getContext('2d'));
});
```
